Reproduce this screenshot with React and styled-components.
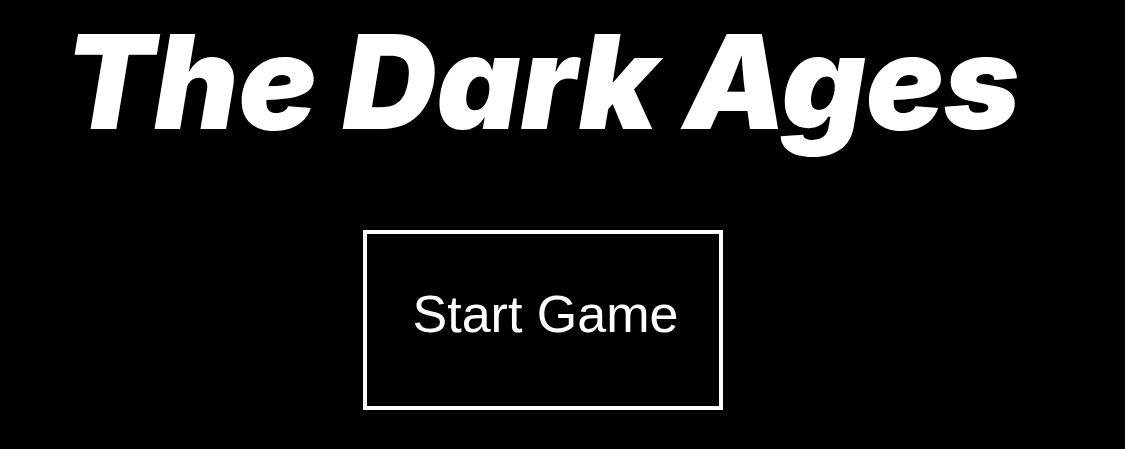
import React from "react";
import styled, { createGlobalStyle } from "styled-components";

const GlobalStyle = createGlobalStyle`
  html, body {
    margin: 0;
    padding: 0;
    background: #000;
  }
  body {
    width: 1125px;
    height: 449px;
    overflow: hidden;
  }
`;

const Screen = styled.main`
  display: flex;
  flex-direction: column;
  align-items: center;
  width: 1085px;
  height: 449px;
  background: #000;
`;

const Title = styled.h1`
  margin: 17px 0 0;
  font-family: "Inter", "Noto Sans", sans-serif;
  font-weight: 900;
  font-style: italic;
  font-size: 130px;
  line-height: 1;
  color: #fff;
  letter-spacing: 0;
  white-space: nowrap;
`;

const StartButton = styled.button`
  margin-top: 83px;
  width: 360px;
  height: 180px;
  display: flex;
  align-items: center;
  justify-content: center;
  background: #000;
  border: 4px solid #fff;
  color: #fff;
  font-family: "Liberation Sans", Arial, sans-serif;
  font-size: 52px;
  font-weight: 400;
  padding: 0 0 12px 6px;
  cursor: pointer;
`;

export default function App() {
  return (
    <>
      <GlobalStyle />
      <Screen>
        <Title>The Dark Ages</Title>
        <StartButton type="button">Start Game</StartButton>
      </Screen>
    </>
  );
}
